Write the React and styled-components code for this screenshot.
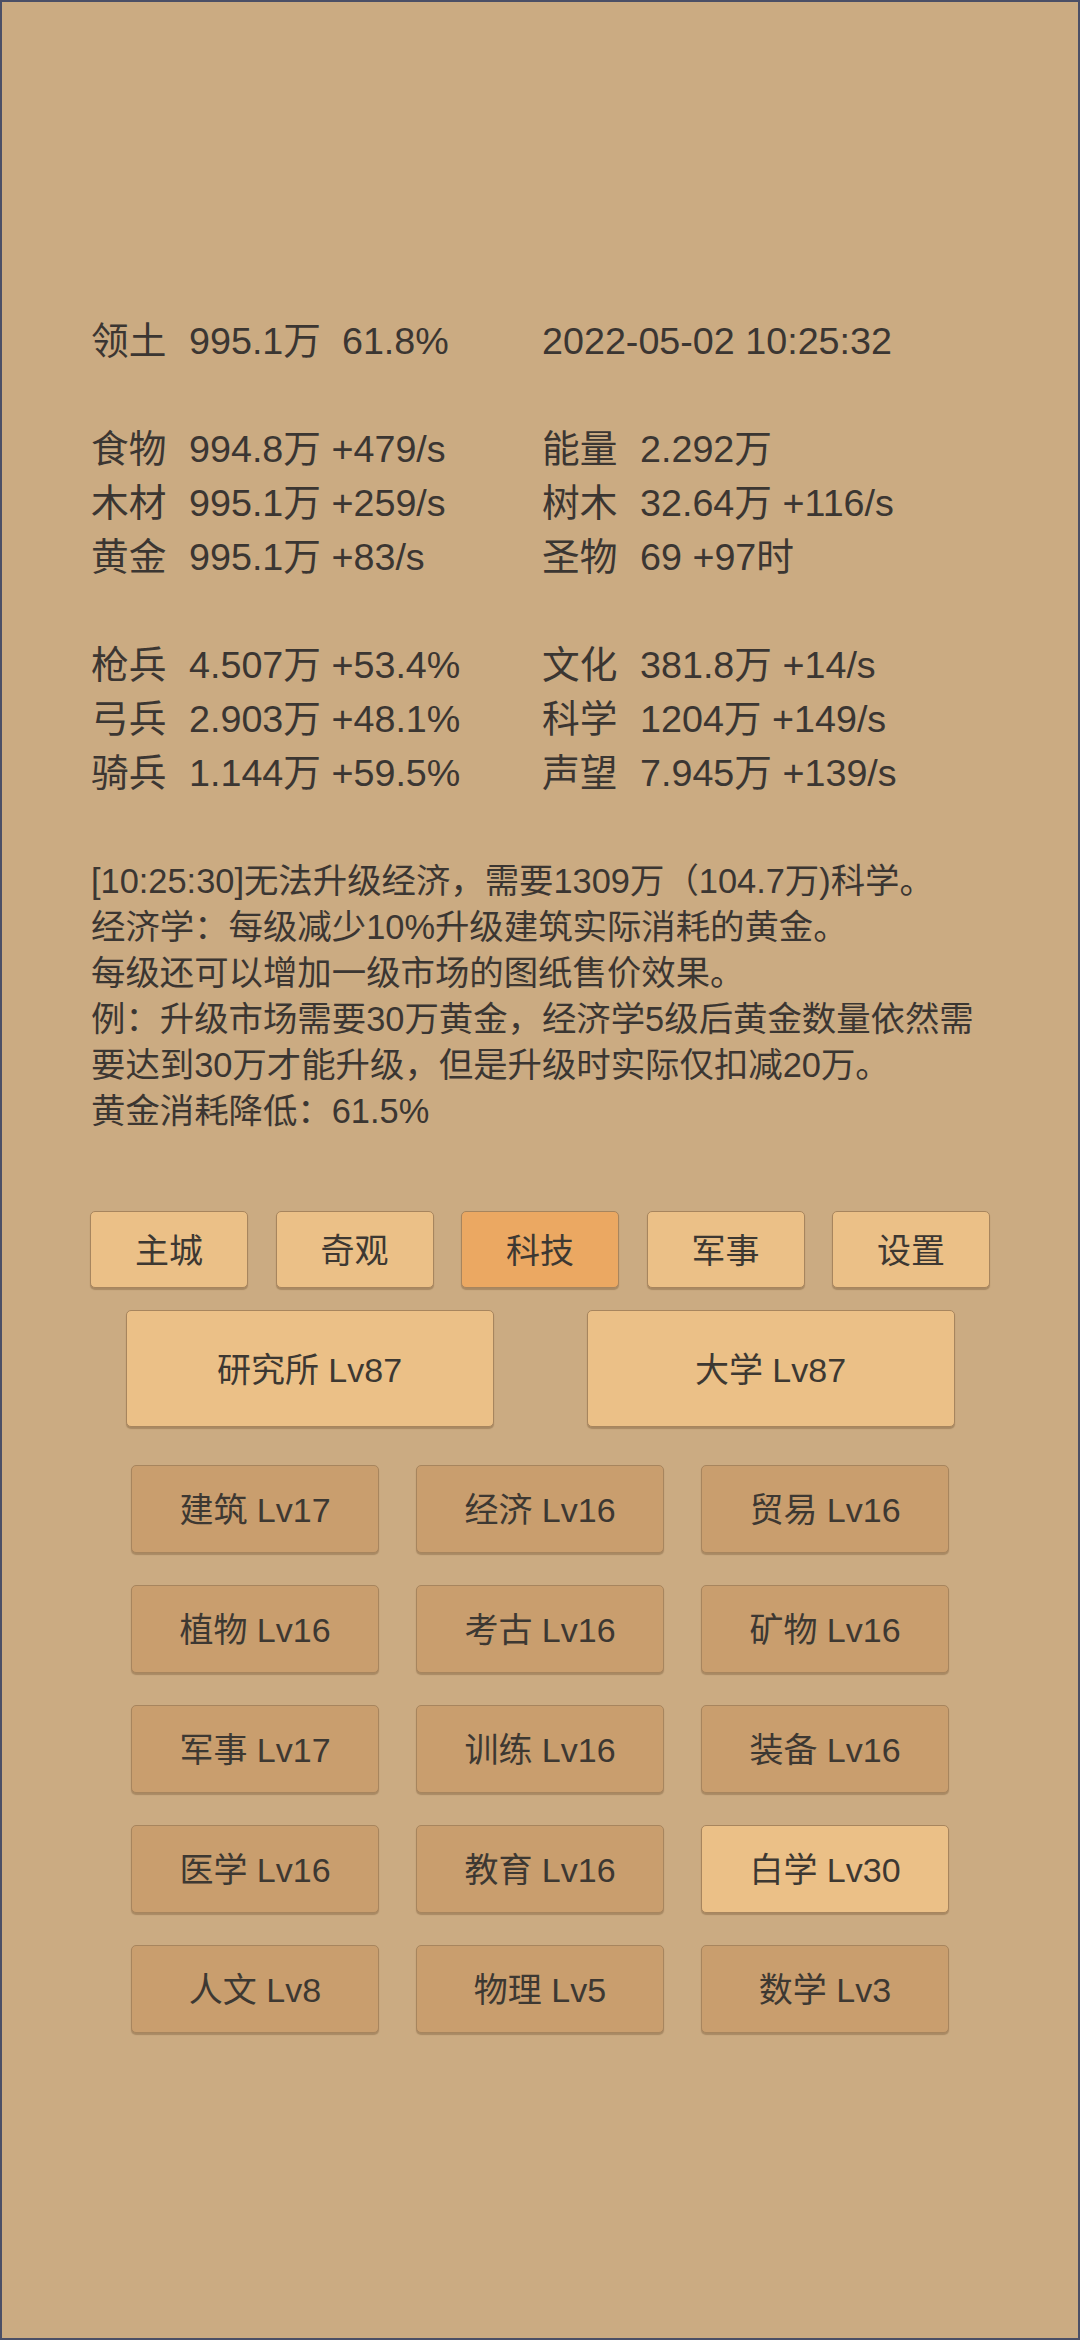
import styled, { createGlobalStyle } from "styled-components";

const GlobalStyle = createGlobalStyle`
  html, body {
    margin: 0;
    padding: 0;
    background: #cbab82;
  }
  * {
    box-sizing: border-box;
  }
`;

const Screen = styled.div`
  width: 1080px;
  height: 2340px;
  border: 2px solid #4b4f66;
  background: #cbab82;
  color: #3b3632;
  font-family: "Liberation Sans", "Noto Sans CJK SC", sans-serif;
  padding: 312px 0 0 89px;
  display: flex;
  flex-direction: column;
`;

const StatGrid = styled.div`
  display: grid;
  grid-template-columns: 451px 1fr;
  font-size: 37.7px;
  line-height: 54px;
  margin-top: ${(props) => (props.spaced ? "54px" : "0")};
`;

const Stat = styled.div`
  white-space: pre;
`;

const Label = styled.span`
  display: inline-block;
  width: 98px;
`;

const Message = styled.div`
  margin-top: 58px;
  font-size: 34.4px;
  line-height: 46px;
  white-space: nowrap;
`;

const Buttons = styled.div`
  margin: 77px 0 0 -89px;
  display: flex;
  flex-direction: column;
  align-items: center;
`;

const TabBar = styled.div`
  display: flex;
  gap: 27.5px;
`;

const Button = styled.div`
  display: flex;
  align-items: center;
  justify-content: center;
  padding-bottom: 3px;
  width: ${(props) => props.w}px;
  height: ${(props) => props.h}px;
  background: ${(props) => props.bg};
  border: 1.5px solid #a7855e;
  border-radius: 5px;
  box-shadow: 0 2px 1px rgba(90, 60, 30, 0.3);
  font-size: 34px;
  color: #3d3832;
  white-space: nowrap;
`;

const BigRow = styled.div`
  display: flex;
  gap: 93px;
  margin-top: 22px;
`;

const TechGrid = styled.div`
  display: grid;
  grid-template-columns: repeat(3, 248px);
  column-gap: 37px;
  row-gap: 32px;
  margin-top: 38px;
`;

const LIGHT = "#ebc087";
const ACTIVE = "#eba862";
const DARK = "#c99e6e";

const groups = [
  [["领土", "995.1万  61.8%"], [null, "2022-05-02 10:25:32"]],
  [
    ["食物", "994.8万 +479/s"], ["能量", "2.292万"],
    ["木材", "995.1万 +259/s"], ["树木", "32.64万 +116/s"],
    ["黄金", "995.1万 +83/s"], ["圣物", "69 +97时"],
  ],
  [
    ["枪兵", "4.507万 +53.4%"], ["文化", "381.8万 +14/s"],
    ["弓兵", "2.903万 +48.1%"], ["科学", "1204万 +149/s"],
    ["骑兵", "1.144万 +59.5%"], ["声望", "7.945万 +139/s"],
  ],
];

const message = [
  "[10:25:30]无法升级经济，需要1309万（104.7万)科学。",
  "经济学：每级减少10%升级建筑实际消耗的黄金。",
  "每级还可以增加一级市场的图纸售价效果。",
  "例：升级市场需要30万黄金，经济学5级后黄金数量依然需",
  "要达到30万才能升级，但是升级时实际仅扣减20万。",
  "黄金消耗降低：61.5%",
];

const tabs = ["主城", "奇观", "科技", "军事", "设置"];

const techs = [
  "建筑 Lv17", "经济 Lv16", "贸易 Lv16",
  "植物 Lv16", "考古 Lv16", "矿物 Lv16",
  "军事 Lv17", "训练 Lv16", "装备 Lv16",
  "医学 Lv16", "教育 Lv16", "白学 Lv30",
  "人文 Lv8", "物理 Lv5", "数学 Lv3",
];

export default function App() {
  return (
    <>
      <GlobalStyle />
      <Screen>
        {groups.map((group, gi) => (
          <StatGrid key={gi} spaced={gi > 0}>
            {group.map(([label, value], i) => (
              <Stat key={i}>
                {label && <Label>{label}</Label>}
                {value}
              </Stat>
            ))}
          </StatGrid>
        ))}

        <Message>
          {message.map((line) => (
            <div key={line}>{line}</div>
          ))}
        </Message>

        <Buttons>
          <TabBar>
            {tabs.map((t) => (
              <Button key={t} w={158} h={77} bg={t === "科技" ? ACTIVE : LIGHT}>
                {t}
              </Button>
            ))}
          </TabBar>
          <BigRow>
            <Button w={368} h={117} bg={LIGHT}>研究所 Lv87</Button>
            <Button w={368} h={117} bg={LIGHT}>大学 Lv87</Button>
          </BigRow>
          <TechGrid>
            {techs.map((t) => (
              <Button key={t} w={248} h={88} bg={t.startsWith("白学") ? LIGHT : DARK}>
                {t}
              </Button>
            ))}
          </TechGrid>
        </Buttons>
      </Screen>
    </>
  );
}
